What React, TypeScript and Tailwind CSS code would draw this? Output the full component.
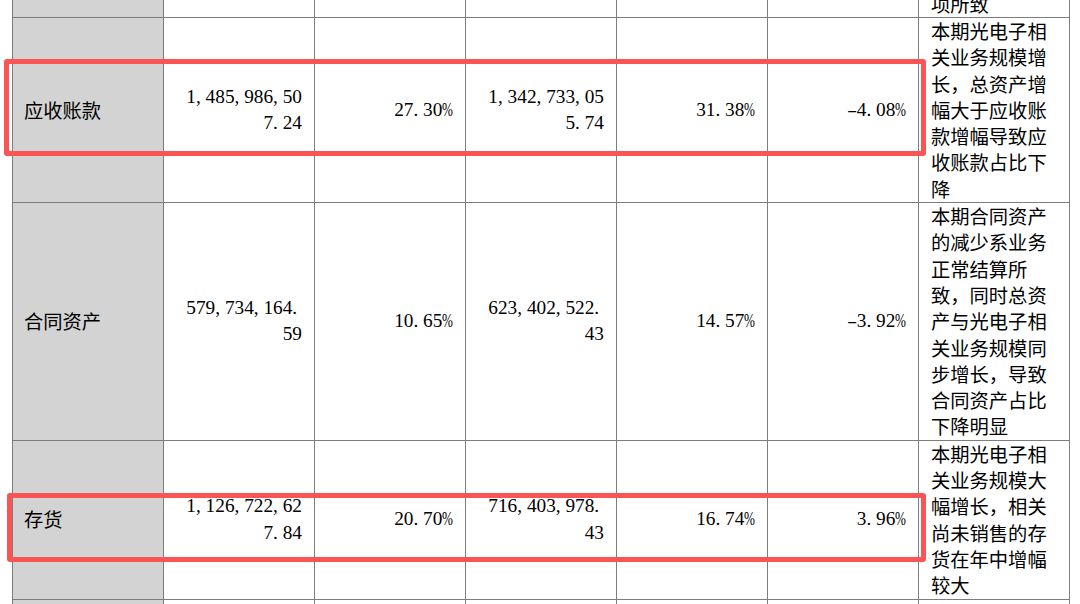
import React from "react";

type Row = {
  label: string;
  current: string[];
  currentPct: string;
  prior: string[];
  priorPct: string;
  change: string;
  note: string[];
};

const rows: Row[] = [
  {
    label: "应收账款",
    current: ["1,485,986,50", "7.24"],
    currentPct: "27.30%",
    prior: ["1,342,733,05", "5.74"],
    priorPct: "31.38%",
    change: "-4.08%",
    note: ["本期光电子相", "关业务规模增", "长，总资产增", "幅大于应收账", "款增幅导致应", "收账款占比下", "降"]
  },
  {
    label: "合同资产",
    current: ["579,734,164.", "59"],
    currentPct: "10.65%",
    prior: ["623,402,522.", "43"],
    priorPct: "14.57%",
    change: "-3.92%",
    note: [
      "本期合同资产",
      "的减少系业务",
      "正常结算所",
      "致，同时总资",
      "产与光电子相",
      "关业务规模同",
      "步增长，导致",
      "合同资产占比",
      "下降明显"
    ]
  },
  {
    label: "存货",
    current: ["1,126,722,62", "7.84"],
    currentPct: "20.70%",
    prior: ["716,403,978.", "43"],
    priorPct: "16.74%",
    change: "3.96%",
    note: ["本期光电子相", "关业务规模大", "幅增长，相关", "尚未销售的存", "货在年中增幅", "较大"]
  }
];

// half-width cells like the source document's song-style font
const Num: React.FC<{ text: string }> = ({ text }) => (
  <span className="whitespace-nowrap">
    {text.split("").map((ch, i) => {
      if (ch === "%") {
        return (
          <span key={i} className="inline-block w-[0.55em]">
            <span className="inline-block origin-left scale-x-[0.68]">%</span>
          </span>
        );
      }
      if (ch === "-") {
        return (
          <span key={i} className="inline-block w-[0.5em] text-center">
            <span className="inline-block scale-x-[1.6]">-</span>
          </span>
        );
      }
      if (ch === "," || ch === ".") {
        return (
          <span key={i} className="inline-block w-[0.5em] text-left">
            {ch}
          </span>
        );
      }
      return <span key={i}>{ch}</span>;
    })}
  </span>
);

const cell = "border-r border-b border-[#7d7d7d]";
const numCell = `${cell} flex flex-col items-end justify-center pr-3 font-['Liberation_Serif',serif]`;

const TableRow: React.FC<{ row: Row }> = ({ row }) => (
  <>
    <div className={`${cell} bg-[#d3d3d3] flex items-center pl-[11px]`}>{row.label}</div>
    <div className={numCell}>
      {row.current.map((l) => (
        <Num key={l} text={l} />
      ))}
    </div>
    <div className={numCell}>
      <Num text={row.currentPct} />
    </div>
    <div className={numCell}>
      {row.prior.map((l) => (
        <Num key={l} text={l} />
      ))}
    </div>
    <div className={numCell}>
      <Num text={row.priorPct} />
    </div>
    <div className={numCell}>
      <Num text={row.change} />
    </div>
    <div className={`${cell} pl-3 pr-2`}>
      {row.note.map((l) => (
        <div key={l}>{l}</div>
      ))}
    </div>
  </>
);

export default function App() {
  return (
    <div className="relative w-[1080px] h-[604px] overflow-hidden bg-white text-black text-[19.3px] leading-[26.3px] font-['Noto_Sans_CJK_SC',sans-serif]">
      <div className="ml-[12px] grid w-max grid-cols-[repeat(7,151px)] border-l border-[#7d7d7d]">
        {/* tail of the row above */}
        <div className={`${cell} h-[18px] bg-[#d3d3d3]`} />
        <div className={`${cell} h-[18px]`} />
        <div className={`${cell} h-[18px]`} />
        <div className={`${cell} h-[18px]`} />
        <div className={`${cell} h-[18px]`} />
        <div className={`${cell} h-[18px]`} />
        <div className={`${cell} h-[18px] flex items-end overflow-hidden pl-3`}>
          <div>项所致</div>
        </div>

        {rows.map((r) => (
          <TableRow key={r.label} row={r} />
        ))}

        {/* start of the next row */}
        <div className="h-[20px] border-r border-[#7d7d7d] bg-[#d3d3d3]" />
        <div className="h-[20px] border-r border-[#7d7d7d]" />
        <div className="h-[20px] border-r border-[#7d7d7d]" />
        <div className="h-[20px] border-r border-[#7d7d7d]" />
        <div className="h-[20px] border-r border-[#7d7d7d]" />
        <div className="h-[20px] border-r border-[#7d7d7d]" />
        <div className="h-[20px] border-r border-[#7d7d7d]" />
      </div>

      {/* highlight marks */}
      <div className="absolute left-[4px] top-[59px] w-[922px] h-[97px] rounded-[3px] border-[5px] border-[#fb5454]" />
      <div className="absolute left-[6.5px] top-[492.5px] w-[919px] h-[69px] rounded-[3px] border-[5px] border-[#fb5454]" />
    </div>
  );
}
